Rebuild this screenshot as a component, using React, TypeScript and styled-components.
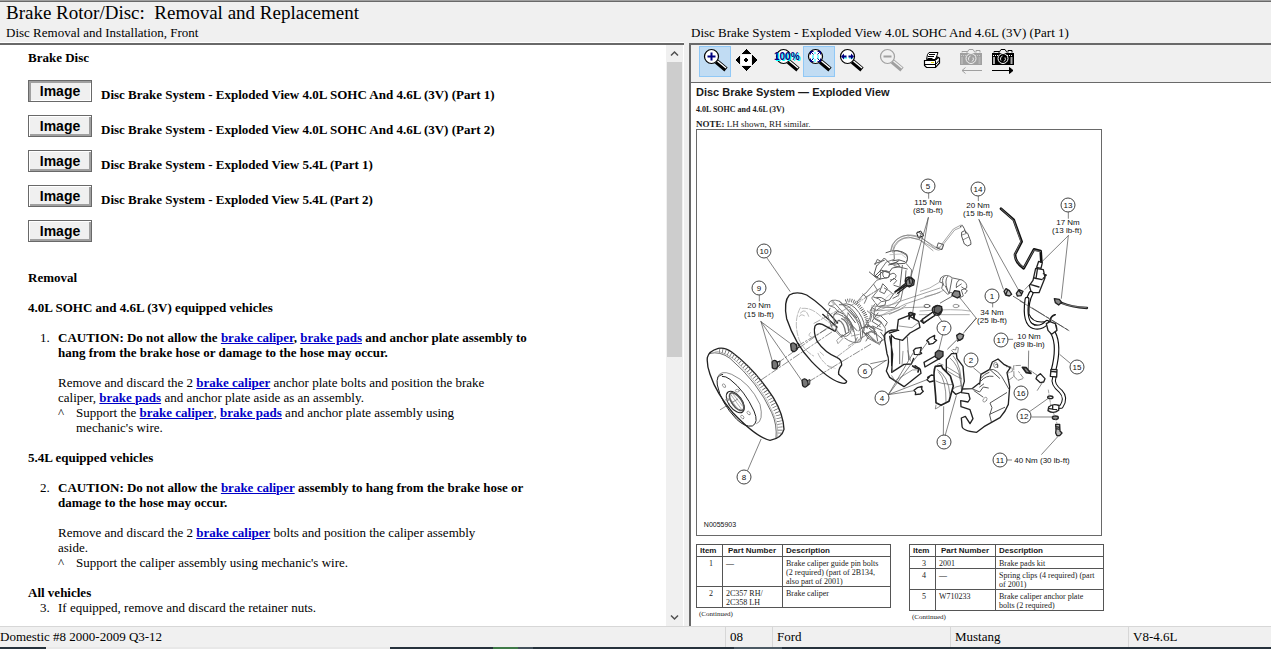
import React from 'react';
import styled, { createGlobalStyle, css } from 'styled-components';

const serif = '"Liberation Serif", "Times New Roman", serif';
const sans = '"Liberation Sans", Arial, sans-serif';

const GlobalStyle = createGlobalStyle`
  * { box-sizing: border-box; }
  body { margin: 0; background: #f0f0f0; color: #000; font: 13px/15px ${serif}; }
`;

const Shell = styled.div`
  display: flex;
  flex-direction: column;
  min-height: 100vh;
  border-top: 1px solid #a0a0a0;
`;

const Columns = styled.div`
  display: grid;
  grid-template-columns: minmax(0, 689fr) minmax(0, 582fr);
`;

const TitleBar = styled(Columns)`
  border-top: 1px solid #696969;
  height: 42px;
`;

const TitleBlock = styled.header`
  padding: 0 6px;
`;

const Title = styled.h1`
  margin: 0;
  font-size: 19px;
  line-height: 22px;
  font-weight: 400;
  white-space: pre;
`;

const Caption = styled.p`
  margin: 0;
  line-height: 18px;
  white-space: nowrap;
`;

const ImageCaption = styled(Caption)`
  align-self: end;
  padding: 0 0 1px 2px;
`;

const Panes = styled(Columns)`
  flex: 1;
`;

const ArticlePane = styled.main`
  display: flex;
  margin-right: 5px;
  border-top: 2px solid #696969;
  background: #fff;
  box-shadow: 0 -1px #fff;
`;

const Article = styled.article`
  flex: 1;
  min-width: 0;
  padding: 5px 10px 8px 28px;
`;

const Heading = styled.h2<{ $tight?: boolean }>`
  margin: 0 0 ${p => (p.$tight ? 0 : 15)}px;
  font-size: 13px;
  line-height: 15px;
`;

const ImageList = styled.div`
  display: grid;
  gap: 13px;
  margin-bottom: 28px;
`;

const ImageRow = styled.label`
  display: flex;
  align-items: flex-end;
  gap: 9px;
  font-weight: 700;
`;

const ImageButton = styled.button<{ $pressed?: boolean }>`
  width: 64px;
  height: 22px;
  padding: 0;
  border: 1px solid #696969;
  background: #f0f0f0;
  color: #000;
  font: 700 14px/18px ${sans};
  box-shadow: ${p => p.$pressed
    ? 'inset 2px 2px #a0a0a0, inset -1px -1px #fff'
    : 'inset 1px 1px #fff, inset -2px -2px #a0a0a0'};
`;

const Steps = styled.ol`
  margin: 0 0 15px;
  padding: 0 0 0 30px;
  list-style: none;
  &:last-child { margin-bottom: 0; }
`;

const Step = styled.li`
  &::before {
    content: counter(list-item) '.';
    float: left;
    margin-left: -18px;
  }
`;

const Paragraph = styled.p<{ $caution?: boolean }>`
  margin: 0 0 ${p => (p.$caution ? 15 : 0)}px;
  max-width: ${p => (p.$caution ? 474 : 440)}px;
  font-weight: ${p => (p.$caution ? 700 : 400)};
`;

const SubStep = styled.div`
  display: grid;
  grid-template-columns: 18px 1fr;
  max-width: 440px;
`;

const TopicLink = styled.a`
  color: #0000c8;
  font-weight: 700;
`;

const ScrollBar = styled.div`
  display: flex;
  flex-direction: column;
  width: 17px;
  margin-right: 1px;
  background: #f0f0f0;
`;

const ScrollArrow = styled.button`
  display: grid;
  place-items: center;
  height: 17px;
  padding: 0;
  border: 0;
  background: #f0f0f0;
`;

const ScrollTrack = styled.div`
  flex: 1;
  padding: 0 1px;
`;

const ScrollThumb = styled.div`
  height: 54%;
  background: #cdcdcd;
`;

const ImagePane = styled.section`
  display: flex;
  flex-direction: column;
  border-left: 2px solid #696969;
  border-top: 2px solid #696969;
  background: #fff;
`;

const Toolbar = styled.div`
  display: flex;
  gap: 8px;
  height: 38px;
  padding: 1px 8px 0;
  border-bottom: 1px solid #696969;
  background: #f0f0f0;
`;

const ToolGroup = styled.div`
  display: flex;
`;

const ToolButton = styled.button<{ $active?: boolean }>`
  width: 32px;
  height: 31px;
  padding: 0;
  border: 0;
  background: transparent;
  ${p => p.$active && css`
    background: #c1dcf3;
    box-shadow: inset 0 0 0 1px #90c8f6;
  `}
  svg { display: block; }
`;

const Sheet = styled.div`
  padding: 2px 6px 2px 5px;
  color: #1a1a1a;
`;

const SheetTitle = styled.h2`
  margin: 0 0 6px;
  font: 700 11px/14px ${sans};
`;

const SheetNote = styled.p<{ $small?: boolean }>`
  margin: 0 0 ${p => (p.$small ? 4 : 0)}px;
  font-size: ${p => (p.$small ? 8 : 9)}px;
  line-height: 10px;
`;

const Figure = styled.svg`
  display: block;
  width: 406px;
  height: 407px;
  margin-bottom: 8px;
  border: 1px solid #696969;
  font: 8px ${sans};
`;

const PartsTables = styled.div`
  display: flex;
  align-items: flex-start;
  gap: 18px;
`;

const PartsTable = styled.table`
  width: 195px;
  table-layout: fixed;
  border-collapse: collapse;
  font-size: 8px;
  line-height: 9px;
  th, td {
    border: 1px solid #555;
    padding: 2px 0 0 3px;
    text-align: left;
    vertical-align: top;
  }
  th { padding: 1px 0 1px 3px; font-family: ${sans}; white-space: nowrap; }
  td:first-child { text-align: center; }
  td:last-child { padding-right: 5px; }
  th:nth-child(1) { width: 26px; }
  th:nth-child(2) { width: 60px; padding-left: 5px; }
`;

const Continued = styled.p`
  margin: 2px 0 0 3px;
  font-size: 7px;
  line-height: 8px;
`;

const StatusBar = styled.footer`
  display: grid;
  grid-template-columns: 725fr 47fr 178fr 178fr 143fr;
  height: 21px;
  border-top: 1px solid #d7d7d7;
`;

const StatusCell = styled.span`
  padding-top: 2px;
  white-space: nowrap;
  & + & { padding-left: 4px; border-left: 1px solid #d7d7d7; }
`;

const Taskbar = styled.div`
  display: grid;
  grid-template-columns: 46fr 344fr 103fr 25fr 15fr 201fr 48fr 489fr;
  height: 2px;
  background: #26323c;
`;

const TaskItem = styled.i<{ $tone: string }>`
  background: ${p => p.$tone};
`;

const Glass = ({ muted = false, children }: { muted?: boolean; children?: React.ReactNode }) => {
  const ink = muted ? '#a0a0a0' : '#000';
  return (
    <svg width="32" height="31" viewBox="0 0 32 31">
      <path d="M17.500 15.500l9.500 8" stroke={ink} strokeWidth="5" />
      <path d="M18.500 15l8.500 7" stroke={muted ? '#f0f0f0' : '#fff'} strokeWidth="1.500" />
      <path d="M19 17l7 6" stroke={ink} strokeWidth="1" strokeDasharray="1 1" />
      <circle cx="12.500" cy="10.500" r="7" fill={muted ? '#f0f0f0' : '#fff'} stroke={ink} strokeWidth="1.200" />
      {children}
    </svg>
  );
};

const PanIcon = () => (
  <svg width="32" height="31" viewBox="0 0 32 31" shapeRendering="crispEdges">
    <path d="M15 3l5 5H10zM15 25l5-5H10zM4 14l5-5v10zM26 14l-5-5v10z" fill="#000" />
    <path d="M10 9h10v10H10z" fill="#fff" />
    <path d="M14 12h2v1h1v2h-1v1h-2v-1h-1v-2h1z" fill="#000" />
  </svg>
);

const PrinterIcon = () => (
  <svg width="32" height="31" viewBox="0 0 32 31">
    <path d="M12.500 8.500l1.500-2h9l-2.500 7h-9z" fill="#fff" stroke="#000" />
    <path d="M14 8.500h6M13 10.500h6M12.500 12.500h5" stroke="#000" />
    <path d="M9.500 14.500v5l2 2h9l4-4.500v-5l-2-1-3 3.500z" fill="#fff" stroke="#000" strokeWidth="1.200" />
    <path d="M9 14.500h11l4-3M9.500 18.500h11l3.500-4M20.500 15v6" fill="none" stroke="#000" />
    <path d="M16 16h3v1h-3z" fill="#e8d800" />
  </svg>
);

const CameraIcon = ({ muted = false, back = false }: { muted?: boolean; back?: boolean }) => {
  const ink = muted ? '#a0a0a0' : '#000';
  return (
    <svg width="32" height="31" viewBox="0 0 32 31">
      <path d="M7 6.500V5.500h5v1M12 6.500l2-3h4l2 3M21 6.500v-2h4v2" fill="none" stroke={ink} />
      <path d="M5 7h22v12H5z" fill={ink} />
      <path d="M6 9.500h6M20 9.500h6" stroke={muted ? '#c8c8c8' : '#fff'} strokeDasharray="1 1" />
      <path d="M7 11v7M24.500 11v7" stroke={muted ? '#b4b4b4' : '#aaa'} strokeWidth="2" />
      <circle cx="16" cy="12.500" r="5" fill={ink} stroke={muted ? '#f0f0f0' : '#fff'} />
      <path d="M14 14.500a3 3 0 0 1 1.500-4.500M18 11.500a3 3 0 0 1-1 4" fill="none" stroke="#f0f0f0" />
      {back
        ? <path d="M27 24.500H7M10.500 21.500L7 24.500l3.500 3" fill="none" stroke={ink} />
        : <path d="M5 24.500h21M22.500 21.500l3.500 3-3.500 3z" fill={ink} stroke={ink} />}
    </svg>
  );
};

const Chevron = ({ down = false }: { down?: boolean }) => (
  <svg width="9" height="7" viewBox="0 0 9 7">
    <path d={down ? 'M1 1.500l3.500 3.500L8 1.500' : 'M1 5.500L4.500 2 8 5.500'} fill="none" stroke="#505050" strokeWidth="1.500" />
  </svg>
);

const callouts: [number, number, number][] = [
  [5, 928, 185], [14, 978, 188], [13, 1068, 204], [10, 764, 250], [9, 759, 287],
  [1, 992, 295], [7, 944, 327], [17, 1001, 339], [2, 971, 359], [15, 1077, 366],
  [6, 865, 370], [16, 1021, 392], [4, 882, 397], [12, 1024, 415], [3, 944, 441],
  [11, 1000, 459], [8, 744, 476],
];

const torques: [string, number, number][] = [
  ['115 Nm', 928, 204], ['(85 lb-ft)', 928, 212],
  ['20 Nm', 978, 207], ['(15 lb-ft)', 978, 215],
  ['17 Nm', 1068, 224], ['(13 lb-ft)', 1067, 232],
  ['20 Nm', 759, 307], ['(15 lb-ft)', 759, 316],
  ['34 Nm', 992, 314], ['(25 lb-ft)', 992, 322],
  ['10 Nm', 1029, 338], ['(89 lb-in)', 1029, 346],
  ['40 Nm (30 lb-ft)', 1042, 462],
];

const ExplodedView = () => (
  <Figure viewBox="697 129 404 405" role="img" aria-label="Exploded view of the front disc brake">
    <g fill="none" stroke="#222" strokeWidth="2" strokeLinecap="round" strokeLinejoin="round">
      {/* rotor, dust shield and mounting bolts */}
      <g transform="translate(690 160) scale(.33333)">
        <path d="M52 590Q56 570 85 562Q105 558 125 573Q195 625 250 710Q280 760 282 805Q275 832 240 838Q200 830 130 757Q80 700 60 640Q50 612 52 590Z" fill="#fff" strokeWidth="4" />
        <path d="M60 577Q90 570 120 592Q205 665 245 755Q262 790 258 833" strokeWidth="2" />
        <path d="M88 568Q120 572 155 606Q225 670 262 755Q273 790 270 823" stroke="#555" strokeWidth="15" strokeDasharray="2 7" strokeLinecap="butt" />
        <path d="M75 570Q110 574 140 602Q216 675 250 758Q266 793 263 828" stroke="#777" strokeWidth="1.500" />
        <path d="M82 650Q90 625 125 640Q180 665 210 730Q222 780 200 788" strokeWidth="2" stroke="#555" />
        <path d="M98 640Q77 643 82 672Q92 725 140 775Q165 799 187 795Q207 785 192 750Q165 690 120 655Q107 645 97 646" strokeWidth="3" />
        <ellipse cx="136" cy="723" rx="37" ry="20" transform="rotate(54 136 723)" strokeWidth="3" />
        <ellipse cx="140" cy="722" rx="31" ry="14" transform="rotate(54 140 722)" stroke="#555" strokeWidth="5" strokeDasharray="2 3" />
        <path d="M122 700l34 47M119 711l30 40M128 698l30 38" stroke="#888" />
        <g stroke="#777"><ellipse cx="102" cy="674" rx="6" ry="4" transform="rotate(50 102 674)" /><ellipse cx="142" cy="689" rx="6" ry="4" /><ellipse cx="176" cy="756" rx="6" ry="4" transform="rotate(50 176 756)" /><ellipse cx="157" cy="768" rx="6" ry="4" transform="rotate(50 157 768)" /><ellipse cx="112" cy="716" rx="5" ry="4" /></g>
        <path d="M91 746l54-33M213 657L430 510M263 606L430 488M322 555L440 487M356 662L545 548" stroke="#555" strokeDasharray="22 6 5 6" />
        <path d="M443 486Q395 430 350 402Q320 389 298 402Q280 422 290 473Q315 548 365 602Q415 654 448 664Q470 671 470 661L446 640Q444 626 455 612Q456 596 440 589Q405 575 382 542Q369 515 375 495Q381 485 397 490L436 511L441 498L398 460" strokeWidth="4" />
        <path d="M336 442Q364 439 391 465L434 497M331 440Q309 481 327 535Q342 569 371 585M331 456q15-18 25 10M343 464q-14-8-16 7M384 577q10 25 41 46M413 614l22 8M390 573l11 10M361 515q-10 10 3 13" stroke="#999" strokeDasharray="18 5" />
        <g strokeWidth="4"><path d="M302 551q7-11 17 1l3 12q-9 14-18 3zM246 603q8-10 16 1l2 12q-8 13-17 4zM336 658q8-10 17 2l2 11q-10 13-17 3z" fill="#777" /><path d="M316 551l10-4 1 12-9 4M261 603l9-3-1 14-7 2M351 659l9-3-1 14-7 3" strokeWidth="3" /></g>
        <path d="M224 281L300 391M213 482L302 548M213 482L248 604M213 482L336 660M173 928L213 835M208 400v20M542 608l48-10" stroke="#444" />
      </g>

      {/* hub, steering knuckle and upper suspension */}
      <g transform="translate(780 220) scale(.33333)" stroke="#777">
        <path d="M145 250Q150 230 180 241L224 287Q262 325 241 362Q220 371 194 351M147 253l17 7M156 238l39 43Q221 304 227 358M178 241l40 42Q244 309 242 350M188 285q-34-20-26 14l9 30q20 29 38 10 15-20-21-54zM192 282q29 20 28 50" strokeWidth="3" />
        <path d="M176 298q16 5 21 38M185 293q18 6 21 37M194 289q17 6 23 37" strokeWidth="4" />
        <path d="M197 241q24-12 49 25 23 32 13 52" stroke="#444" strokeWidth="11" strokeDasharray="2 4" strokeLinecap="butt" />
        <path d="M187 250q27-9 50 25 21 31 15 54M178 251q27-4 47 25 19 25 19 46" stroke="#666" strokeWidth="3" />
        <path d="M210 266l20 24M204 276l22 29M214 311l17 18M161 281l13-10 16 8M163 304l16-6M183 348l24-15" stroke="#555" strokeWidth="3" />
        <path d="M189 352l-15 16-4-10 18-17M204 276q-9 26 10 63M214 345l24-5M154 242l9 9-12 4" />
        <path d="M150 262l-8 18 14 40 30 30M166 262l10 12M232 350l-8 14M246 332l20 14-8 14M258 296l12 22 16 6M262 270l14 12-6 20M284 250l-14 20" strokeWidth="3" />
        <path d="M232 242l17-20 9-6 32-38 12-4-1-26 18-25 24-8-1-23Q350 84 371 98q19 6 7 29l17 20-4 33-19 12-10 46-18 22-41-2-14 10-14-9-5 32-22 36 15 24 29 16 23-13 1-32-15-22-21-10 6-31 17-17M248 219l13 11-8 17M281 190l12 19-18 22 9 12" strokeWidth="3" />
        <path d="M318 95q35-15 62 5 7 17-5 27l-43 3M291 134l22-23 18 18 19-5 10 13-23 4-9 12-20-2-17 17-9-8 8-26M284 128l29-10M286 164l17-17 27 9-4 13-25 5-18-9M268 153l24 20M326 132q22-5 31-13M338 119q19-7 37 3" stroke="#555" strokeWidth="3" />
        <path d="M304 122l-12-7-7 16M308 156q6-13 18-3 7 13-5 18-13 2-13-15zM326 165q15-16 22-2 1 13-17 14M331 182l11-11 8 8-9 10M309 189l13 13-9 16-13-6zM313 201q14 6 26 18M290 229q14-3 28 9l-3 14-20 5-9-11M342 134l40 10M367 133l-7 62M378 149l-2 26M342 193l19 6-5 24-17 9" stroke="#666" strokeWidth="3" />
        <path d="M281 228q18 4 24 14l23-5 14-20M274 275q10 10 28 9l20 20-6 11M294 276l-18 25 25 16M268 322l39 32-9 17-38-36M285 294l20 12-13 11M278 315l29 14M302 334l9 12" stroke="#666" strokeWidth="3" />
        <path d="M275 255Q325 260 360 241L480 201M273 267Q333 276 376 249L480 214M284 285q61-5 94-32M328 280l45-20 63-2" />
        <path d="M332 91Q342 40 392 42l28 4 44 35 16-3M338 94Q349 48 392 50l25 5 42 34" />
        <path d="M255 230L306 199M225 251l75-49M181 274l63-40M205 375l78-48M102 307l75-41M170 408L278 327" stroke="#777" strokeDasharray="20 5 4 5" />
        <path d="M251 318q22-9 37 16l5 26M247 330l18 16 22 17M255 340l16-9 18 8M262 313l19 6 4 22M236 330q12-18 27-9" stroke="#666" strokeWidth="3" />
        <path d="M318 232q14-19 29-14l8 8M330 101l34-2 13 11" stroke="#aaa" />
        <path d="M345 213l34-21" stroke="#222" strokeWidth="5" />
        <path d="M378 184l3-8 12-7 10 9-2 14-13 6-8-5z" fill="#888" stroke="#222" strokeWidth="4" />
        <path d="M411 35l11-5 9 14-15 6z" stroke="#222" strokeWidth="3" />
      </g>

      {/* control arm, sensor lead, brake line and hose fittings */}
      <g transform="translate(860 160) scale(.33333)">
        <path d="M92 268Q95 231 143 222L182 230L225 257Q240 268 245 250L280 204L303 192M98 269Q104 233 145 228L180 237L227 265Q245 274 250 250L284 207L303 199" stroke="#777" />
        <path d="M173 213l11 5-5 15M236 246l15 5-5 15-15-5zM301 197l6-4 6 10 4 12M306 213l8-4 9 8 9 24 1 9-10 5-10-6-8-23z" stroke="#555" strokeWidth="3" />
        <path d="M306 222l14-5M310 236l16-8" stroke="#555" strokeWidth="2" />
        <path d="M181 391Q208 385 238 364M195 407Q230 400 251 388M38 453Q96 438 120 412M48 472q34-21 71-33M180 450q108-8 150 0M178 461h150" stroke="#888" />
        <ellipse cx="201" cy="435" rx="9" ry="5" /><ellipse cx="288" cy="435" rx="9" ry="5" stroke="#666" />
        <path d="M243 350q15-14 35 1l28 6q17 9 14 24l-16 6 6 18-13 6-24-17-10 6-18-18 4-15-9-4zM276 353l-8 43M298 357q-11 5-9 23M304 369l-15 10M305 378l17 11-7 9M252 347q-9 10-1 26M262 347q-9 12 0 40M256 375l10 20" stroke="#666" strokeWidth="3" />
        <path d="M278 397l6-8 14 2 3 14-9 6-16-8z" fill="#888" strokeWidth="4" />
        <path d="M241 426L276 406" />
        <path d="M182 480l37-27q-8-13 10-19 20-1 16 17-4 16-20 10L191 487z" fill="#fff" strokeWidth="4" />
        <path d="M223 445l6-10 12 2 4 13-10 10-12-5z" fill="#666" strokeWidth="4" />
        <path d="M107 391l30-24q-5-17 10-19 17 6 8 23-6 5-13 3l-29 23M146 350l4 17" strokeWidth="4" />
        <path d="M150 463q-9-6 2-8l13 4-4 9" strokeWidth="5" />
        <path d="M205 170L152 350M205 170L158 454M357 176L430 384M357 176L475 386M625 224L545 303M625 224L604 412M349 472L297 407M349 472L315 510M206 96v16M355 103v16M398 423v15M625 152v20M519 360L495 385" stroke="#444" />
        <path d="M423 143L461 176L485 242L465 280Q465 304 491 322L522 265L542 270L544 302" stroke="#111" strokeWidth="8" />
        <path d="M424 144L461 178L483 242L463 283Q469 305 491 320L522 267L542 272" stroke="#999" strokeWidth="2" />
        <path d="M527 322L550 326L555 350L537 395L514 395L508 374L519 358zM523 351l23 5M513 371l24 7M532 326l-4 27M550 338l9 4-10 11" fill="#fff" strokeWidth="4" />
        <path d="M536 301l-6 18 13 3 4-17z" strokeWidth="4" />
        <path d="M513 397Q500 420 501 460Q516 498 565 486" stroke="#111" strokeWidth="15" /><path d="M513 397Q500 420 501 460Q516 498 565 486" stroke="#fff" strokeWidth="8" />
        <path d="M570 481q2-15 16-20M585 490q8 7 3 20" strokeWidth="4" />
        <path d="M432 391l6-8 10 6 7 11-7 5-11-3zM443 387l-5 12M469 397l8-11 12 5-6 13-11 1zM476 388l8 10" strokeWidth="4" fill="#bbb" />
        <path d="M460 406L627 509" strokeDasharray="44 7 8 7" />
        <path d="M583 413l15 2 7 9-9 8-10-7z" fill="#888" strokeWidth="4" /><path d="M606 426q26 12 75 15" strokeWidth="7" />
        <path d="M608 428q26 9 71 12" stroke="#999" strokeWidth="2" />
      </g>

      {/* anchor plate, pads, caliper and flexible hose */}
      <g transform="translate(860 300) scale(.33333)">
        <path d="M88 96L111 89L115 56L146 44L176 61L180 79L150 96L128 118L104 112L94 103" fill="#fff" strokeWidth="4" />
        <path d="M116 88q-32-5-44 16l9 54Q91 179 79 210L89 229L132 257L183 217L181 205L165 194M89 106l9 53-3 55L132 190l22-1 7-17M94 101L95 194" strokeWidth="4" />
        <path d="M142 109l4 67M119 117v71" strokeWidth="2" />
        <path d="M95 199q6 5 2 14M129 151l-3 42M143 149l9 31M104 240l53-33 23-1M117 75l39 5 19-15M104 238l-9-14" stroke="#666" />
        <path d="M147 54l2-10 13-4v13M158 195l9 6 10 1-3 11" strokeWidth="5" />
        <g fill="#fff" strokeWidth="4"><path d="M160 149l7-7 17-3-3 14 4 4-8 4-14-1-1-8zM200 119l9-8 15-8-1 11 7 4-10 9-13 3-1-7zM203 229l11-7 7 1M220 240l-11 3-8-7 8-9M162 268l10-8 14-4-1 9 5 6-9 8-15 2 1-7z" /></g>
        <path d="M192 184l39-22 8 10-44 26zM187 55l32-22 6 10-35 23z" fill="#fff" strokeWidth="4" />
        <path d="M226 155l9-7 14 4v13l-12 10-11-7zM222 20l10-7 13 4v12l-10 10-12-6z" fill="#666" strokeWidth="4" />
        <path d="M290 103l9-6 12 5-3 10-9 6-7-5zM297 116l-4 4" fill="#999" strokeWidth="4" />
        <path d="M263 144L290 117" />
        <path d="M259 175l16-17 14-1 2 15 18 24 4 45-9 32-17 7-15-15-3-31-10-4z" fill="#fff" strokeWidth="4" />
        <path d="M261 198l36 22 10 47M283 157l-8-8 4-4 8 2 2-9 6 2-2 16M271 172q24 20 30 59M273 268q14-13 29-14M254 205l30 18 20 10M280 165q26 30 24 98" stroke="#555" />
        <path d="M223 240Q220 210 226 196L244 194L248 202L271 225L280 255L267 301L243 313L228 305L227 286z" fill="#fff" strokeWidth="5" />
        <path d="M231 193l6-6 12 5M228 312l-2 12 14-8M236 213q23 24 22 89M228 240q20 10 30 8 14 6 20 2M232 206q34 18 38 78" stroke="#555" />
        <path d="M359 249L363 220L389 205L397 183L414 174L433 191L451 200L441 215L449 257L445 310L435 330L420 350L372 377L350 394Q305 390 306 374L304 351L316 346L330 368L339 353L330 326L303 317L302 299L324 303L330 294L326 278L304 275L307 264L336 263L357 247z" fill="#fff" strokeWidth="4" />
        <path d="M363 240q14-18 36-14M363 232q10-14 24-18M389 206q23-9 49 43l8 14M336 263l23 10 11-15 15 3M342 269l27 19M389 205l30 27M440 275l-50 31 6 14-7 22 5 20M434 319l-45 21M371 249l-12 9M407 191q9-5 6 9" stroke="#555" strokeWidth="3" />
        <ellipse cx="407" cy="192" rx="6" ry="8" stroke="#555" /><ellipse cx="375" cy="296" rx="5" ry="8" transform="rotate(35 375 296)" stroke="#777" />
        <path d="M439 197q20-5 18 14l-15 6M447 237l15-11-1-32 25-1M461 225l13 13 17-6-15-20" strokeDasharray="14 5" stroke="#555" />
        <path d="M487 199l12 1 14 17-14-2z" fill="#888" strokeWidth="5" />
        <path d="M531 226l10-8 14 15-4 10-10 2-13-12z" fill="#fff" strokeWidth="4" />
        <path d="M512 209L530 222" strokeDasharray="5 4" />
        <path d="M501 -5Q491 66 521 77Q544 83 561 64" stroke="#111" strokeWidth="15" /><path d="M501 -5Q491 66 521 77Q544 83 561 64" stroke="#fff" strokeWidth="8" />
        <path d="M579 95Q600 134 580 210" stroke="#111" strokeWidth="17" /><path d="M579 95Q600 134 580 210" stroke="#fff" strokeWidth="10" />
        <path d="M559 68L564 88L575 100L591 88L586 68L570 62z" fill="#fff" strokeWidth="4" />
        <path d="M570 57q3-13 15-16" strokeWidth="4" />
        <path d="M583 229Q575 249 602 271Q621 291 604 317L583 318" stroke="#111" strokeWidth="13" /><path d="M583 229Q575 249 602 271Q621 291 604 317L583 318" stroke="#fff" strokeWidth="7" />
        <path d="M573 205l18 1-1 22-19-2zM574 211l16 2" fill="#fff" strokeWidth="4" />
        <path d="M566 318q13-12 31-4l-1 14q-16 12-32 1zM578 315v10M568 323l22 3" fill="#fff" strokeWidth="4" />
        <ellipse cx="571" cy="289" rx="8" ry="4" strokeWidth="4" /><ellipse cx="586" cy="350" rx="9" ry="5" fill="#999" strokeWidth="4" />
        <path d="M587 370h12l1 20 6 6-7 8h-8l-4-8 1-9zM587 377l12 2M588 383l12 2" fill="#bbb" strokeWidth="4" />
        <path d="M565 267l7 44M581 337l10 30" stroke="#777" strokeDasharray="9 5" />
        <path d="M36 206L77 179M85 281L160 155M85 281L202 124M85 281L201 236M85 281L163 269M247 63L231 39M248 101L236 149M250 405L251 317M255 405L289 284M341 201L365 221M348 52L310 97M506 150L505 204M443 115h15M532 268L549 242M515 348h63M507 333L565 292M600 161L631 187M441 477h14M545 460L595 405M480 0L627 89" stroke="#444" />
      </g>
    </g>
    <g fill="#fff" stroke="#444" strokeWidth="1">
      {callouts.map(([n, x, y]) => <circle key={n} cx={x} cy={y} r="7" />)}
    </g>
    <g fill="#111" textAnchor="middle">
      {callouts.map(([n, x, y]) => <text key={n} x={x} y={y + 3}>{n}</text>)}
      {torques.map(([t, x, y]) => <text key={`${t}${x}`} x={x} y={y}>{t}</text>)}
      <text x="720" y="526" fontSize="7">N0055903</text>
    </g>
  </Figure>
);

const Parts = ({ rows }: { rows: string[][] }) => (
  <div>
    <PartsTable>
      <thead><tr><th>Item</th><th>Part Number</th><th>Description</th></tr></thead>
      <tbody>
        {rows.map(row => <tr key={row[0]}>{row.map(cell => <td key={cell}>{cell}</td>)}</tr>)}
      </tbody>
    </PartsTable>
    <Continued>(Continued)</Continued>
  </div>
);

const images = [
  'Disc Brake System - Exploded View 4.0L SOHC And 4.6L (3V) (Part 1)',
  'Disc Brake System - Exploded View 4.0L SOHC And 4.6L (3V) (Part 2)',
  'Disc Brake System - Exploded View 5.4L (Part 1)',
  'Disc Brake System - Exploded View 5.4L (Part 2)',
  '',
];

const taskTones = ['#26323c', '#e8e8e8', '#26323c', '#3f7a48', '#44525c', '#26323c', '#4c5a64', '#26323c'];

const Caliper = () => <TopicLink href="#brake-caliper">brake caliper</TopicLink>;
const Pads = () => <TopicLink href="#brake-pads">brake pads</TopicLink>;

export default function App() {
  return (
    <>
      <GlobalStyle />
      <Shell>
        <TitleBar>
          <TitleBlock>
            <Title>{'Brake Rotor/Disc:  Removal and Replacement'}</Title>
            <Caption>Disc Removal and Installation, Front</Caption>
          </TitleBlock>
          <ImageCaption>{images[0]}</ImageCaption>
        </TitleBar>
        <Panes>
          <ArticlePane>
            <Article>
              <Heading>Brake Disc</Heading>
              <ImageList>
                {images.map((name, i) => (
                  <ImageRow key={name}>
                    <ImageButton $pressed={i === 0}>Image</ImageButton>
                    {name}
                  </ImageRow>
                ))}
              </ImageList>
              <Heading>Removal</Heading>
              <Heading>4.0L SOHC and 4.6L (3V) equipped vehicles</Heading>
              <Steps>
                <Step>
                  <Paragraph $caution>
                    CAUTION: Do not allow the <Caliper />, <Pads /> and anchor plate assembly to hang from the brake hose or damage to the hose may occur.
                  </Paragraph>
                  <Paragraph>
                    Remove and discard the 2 <Caliper /> anchor plate bolts and position the brake caliper, <Pads /> and anchor plate aside as an assembly.
                  </Paragraph>
                  <SubStep>
                    <span>^</span>
                    <span>Support the <Caliper />, <Pads /> and anchor plate assembly using mechanic's wire.</span>
                  </SubStep>
                </Step>
              </Steps>
              <Heading>5.4L equipped vehicles</Heading>
              <Steps start={2}>
                <Step>
                  <Paragraph $caution>
                    CAUTION: Do not allow the <Caliper /> assembly to hang from the brake hose or damage to the hose may occur.
                  </Paragraph>
                  <Paragraph>
                    Remove and discard the 2 <Caliper /> bolts and position the caliper assembly aside.
                  </Paragraph>
                  <SubStep>
                    <span>^</span>
                    <span>Support the caliper assembly using mechanic's wire.</span>
                  </SubStep>
                </Step>
              </Steps>
              <Heading $tight>All vehicles</Heading>
              <Steps start={3}>
                <Step>If equipped, remove and discard the retainer nuts.</Step>
              </Steps>
            </Article>
            <ScrollBar>
              <ScrollArrow aria-label="Scroll up"><Chevron /></ScrollArrow>
              <ScrollTrack><ScrollThumb /></ScrollTrack>
              <ScrollArrow aria-label="Scroll down"><Chevron down /></ScrollArrow>
            </ScrollBar>
          </ArticlePane>
          <ImagePane>
            <Toolbar>
              <ToolGroup>
                <ToolButton $active aria-label="Zoom in">
                  <Glass><path d="M12.500 6.500v8M8.500 10.500h8" stroke="#000080" strokeWidth="2" /></Glass>
                </ToolButton>
                <ToolButton aria-label="Pan"><PanIcon /></ToolButton>
              </ToolGroup>
              <ToolGroup>
                <ToolButton aria-label="Actual size">
                  <Glass>
                    <g fontFamily="Liberation Sans" fontWeight="700" fontSize="10">
                      <text x="4" y="15" fill="#00ffff">100%</text>
                      <text x="3" y="14" fill="#000080">100%</text>
                    </g>
                  </Glass>
                </ToolButton>
                <ToolButton $active aria-label="Fit image">
                  <Glass>
                    <g fill="none">
                      <path d="M9 10h2M14 10h2M9 12h2M14 12h2M12 6v2M12 13v3" stroke="#0ff" />
                      <path d="M7.500 8.500v-3h3M14.500 5.500h3v3M17.500 12.500v3h-3M10.500 15.500h-3v-3M7.500 5.500l3 3M17.500 5.500l-3 3M17.500 15.500l-3-3M7.500 15.500l3-3" stroke="#000080" />
                    </g>
                  </Glass>
                </ToolButton>
                <ToolButton aria-label="Fit width">
                  <Glass>
                    <path d="M8 12h4M14 12h4" stroke="#0ff" />
                    <path d="M6 10.500l3-3v2h2.500v2H9v2zM19 10.500l-3-3v2h-2.500v2H16v2z" fill="#000080" />
                  </Glass>
                </ToolButton>
              </ToolGroup>
              <ToolGroup>
                <ToolButton disabled aria-label="Zoom out">
                  <Glass muted><path d="M8.500 10.500h8" stroke="#a0a0a0" strokeWidth="2" /></Glass>
                </ToolButton>
              </ToolGroup>
              <ToolGroup>
                <ToolButton aria-label="Print"><PrinterIcon /></ToolButton>
              </ToolGroup>
              <ToolGroup>
                <ToolButton disabled aria-label="Previous image"><CameraIcon muted back /></ToolButton>
                <ToolButton aria-label="Next image"><CameraIcon /></ToolButton>
              </ToolGroup>
            </Toolbar>
            <Sheet>
              <SheetTitle>Disc Brake System — Exploded View</SheetTitle>
              <SheetNote $small><b>4.0L SOHC and 4.6L (3V)</b></SheetNote>
              <SheetNote><b>NOTE:</b> LH shown, RH similar.</SheetNote>
              <ExplodedView />
              <PartsTables>
                <Parts rows={[
                  ['1', '—', 'Brake caliper guide pin bolts (2 required) (part of 2B134, also part of 2001)'],
                  ['2', '2C357 RH/ 2C358 LH', 'Brake caliper'],
                ]} />
                <Parts rows={[
                  ['3', '2001', 'Brake pads kit'],
                  ['4', '—', 'Spring clips (4 required) (part of 2001)'],
                  ['5', 'W710233', 'Brake caliper anchor plate bolts (2 required)'],
                ]} />
              </PartsTables>
            </Sheet>
          </ImagePane>
        </Panes>
        <StatusBar>
          <StatusCell>Domestic #8 2000-2009 Q3-12</StatusCell>
          <StatusCell>08</StatusCell>
          <StatusCell>Ford</StatusCell>
          <StatusCell>Mustang</StatusCell>
          <StatusCell>V8-4.6L</StatusCell>
        </StatusBar>
        <Taskbar>
          {taskTones.map((tone, i) => <TaskItem key={i} $tone={tone} />)}
        </Taskbar>
      </Shell>
    </>
  );
}
